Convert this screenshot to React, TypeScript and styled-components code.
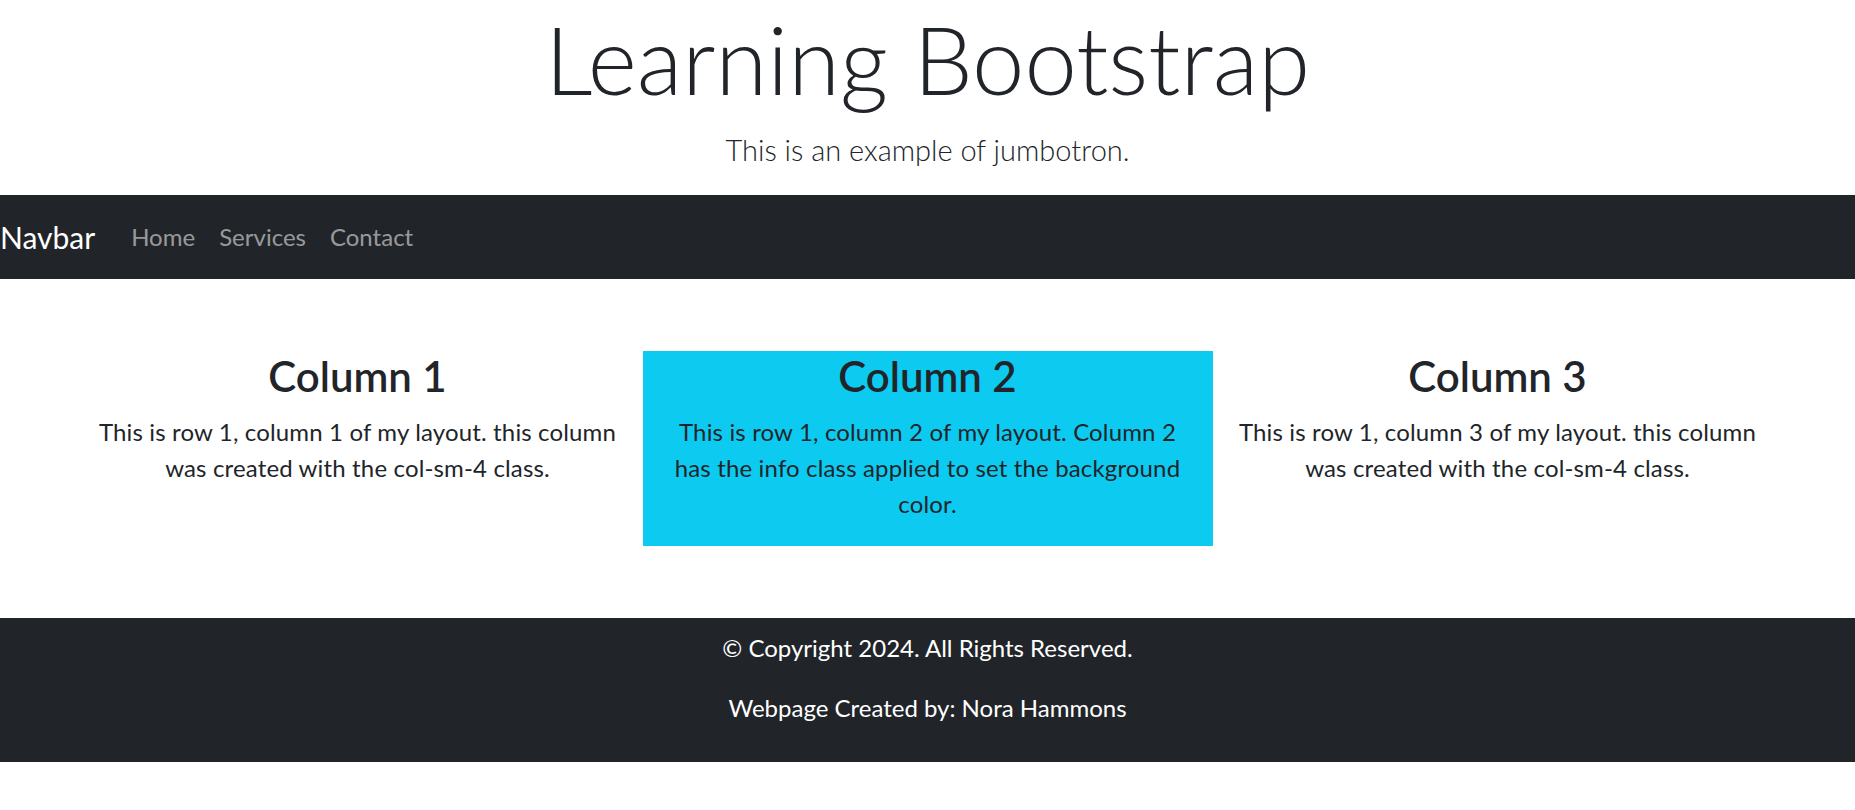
import React from "react";
import styled, { createGlobalStyle } from "styled-components";

const colors = {
  body: "#212529",
  dark: "#212529",
  info: "#0dcaf0",
  white: "#ffffff",
  navLink: "rgba(255, 255, 255, 0.55)",
};

const GlobalStyle = createGlobalStyle`
  html, body {
    margin: 0;
    padding: 0;
    background: #ffffff;
  }
  body {
    font-family: "Lato", "Open Sans", "Liberation Sans", sans-serif;
    color: ${colors.body};
    font-size: 24px;
    line-height: 1.5;
  }
  * {
    box-sizing: border-box;
  }
`;

const Jumbotron = styled.header`
  padding-top: 3px;
  text-align: center;
`;

const Title = styled.h1`
  margin: 0 0 12px 0;
  font-size: 94px;
  font-weight: 300;
  line-height: 1.2;
`;

const Lead = styled.p`
  margin: 0 0 24px 0;
  font-size: 29px;
  font-weight: 300;
  line-height: 1.5;
`;

const Navbar = styled.nav`
  height: 84px;
  background: ${colors.dark};
  display: flex;
  align-items: center;
`;

const Brand = styled.a`
  color: ${colors.white};
  font-size: 30px;
  margin-right: 24px;
  text-decoration: none;
`;

const NavList = styled.ul`
  display: flex;
  list-style: none;
  margin: 0;
  padding: 0;
`;

const NavLink = styled.a`
  display: block;
  padding: 0 12px;
  color: ${colors.navLink};
  font-size: 24px;
  text-decoration: none;
`;

const Container = styled.main`
  width: 1710px;
  margin: 0 auto;
  padding: 72px 0;
`;

const Row = styled.div`
  display: grid;
  grid-template-columns: repeat(3, 1fr);
`;

const Column = styled.section<{ $info?: boolean }>`
  padding: 0 18px;
  text-align: center;
  background: ${(p) => (p.$info ? colors.info : "transparent")};
`;

const ColumnTitle = styled.h3`
  margin: 0 0 12px 0;
  font-size: 42px;
  font-weight: 600;
  line-height: 1.2;
`;

const ColumnText = styled.p`
  margin: 0 0 24px 0;
  letter-spacing: 0.15px;
`;

const Footer = styled.footer`
  background: ${colors.dark};
  color: ${colors.white};
  text-align: center;
  padding: 12px 0;
`;

const FooterText = styled.p`
  margin: 0 0 24px 0;
`;

const columns = [
  {
    title: "Column 1",
    text: "This is row 1, column 1 of my layout. this column was created with the col-sm-4 class.",
  },
  {
    title: "Column 2",
    text: "This is row 1, column 2 of my layout. Column 2 has the info class applied to set the background color.",
    info: true,
  },
  {
    title: "Column 3",
    text: "This is row 1, column 3 of my layout. this column was created with the col-sm-4 class.",
  },
];

const App: React.FC = () => {
  return (
    <>
      <GlobalStyle />
      <Jumbotron>
        <Title>Learning Bootstrap</Title>
        <Lead>This is an example of jumbotron.</Lead>
      </Jumbotron>
      <Navbar>
        <Brand href="#">Navbar</Brand>
        <NavList>
          <li>
            <NavLink href="#">Home</NavLink>
          </li>
          <li>
            <NavLink href="#">Services</NavLink>
          </li>
          <li>
            <NavLink href="#">Contact</NavLink>
          </li>
        </NavList>
      </Navbar>
      <Container>
        <Row>
          {columns.map((col) => (
            <Column key={col.title} $info={col.info}>
              <ColumnTitle>{col.title}</ColumnTitle>
              <ColumnText>{col.text}</ColumnText>
            </Column>
          ))}
        </Row>
      </Container>
      <Footer>
        <FooterText>© Copyright 2024. All Rights Reserved.</FooterText>
        <FooterText>Webpage Created by: Nora Hammons</FooterText>
      </Footer>
    </>
  );
};

export default App;
